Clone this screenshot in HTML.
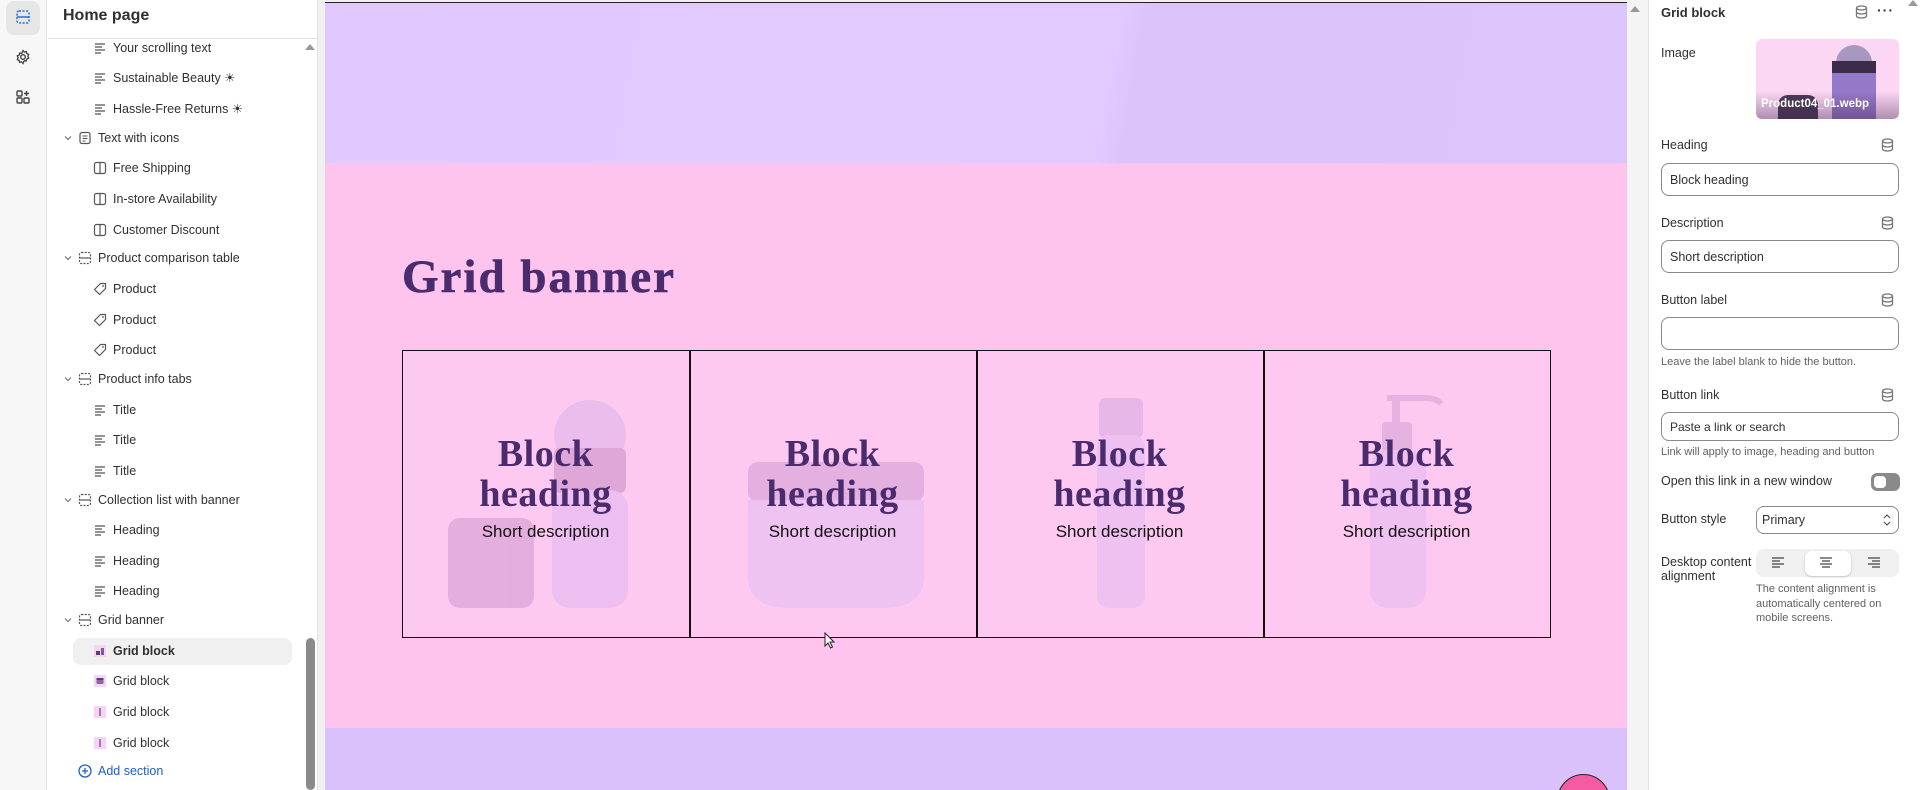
<!DOCTYPE html>
<html><head><meta charset="utf-8"><style>
*{box-sizing:border-box;margin:0;padding:0}
body{width:1920px;height:790px;overflow:hidden;background:#f1f1f1;font-family:"Liberation Sans",sans-serif;color:#303030;position:relative}
.abs{position:absolute}
.rail{left:0;top:0;width:47px;height:790px;background:#f7f7f7;border-right:1px solid #e3e3e3}
.panel{left:47px;top:0;width:271px;height:790px;background:#fff;border-right:1px solid #e3e3e3}
.row{position:absolute;font-size:12.5px;line-height:16px;white-space:nowrap}
.lbl{position:absolute;font-size:12.5px;left:1661px;color:#303030}
.inp{position:absolute;left:1661px;width:238px;border:1px solid #8a8a8a;border-radius:8px;background:#fff;font-size:12.5px;padding-left:8px;display:flex;align-items:center}
.hint{position:absolute;left:1661px;font-size:11px;color:#616161}
.db{position:absolute;left:1881px}
.bh{position:absolute;width:287px;text-align:center;font-family:"Liberation Serif",serif;font-weight:bold;color:#4a2c6e;font-size:38px;line-height:40px;letter-spacing:.5px}
.sd{position:absolute;width:287px;text-align:center;font-size:17px;color:#111}
</style></head><body>

<div class="abs rail"></div>
<div class="abs" style="left:6px;top:1px;width:34px;height:34px;background:#e6e6e6;border-radius:8px"></div>
<svg class="abs" style="left:15px;top:9px" width="16" height="16" viewBox="0 0 16 16"><rect x="2" y="2" width="12" height="12" rx="2" fill="none" stroke="#2c6ecb" stroke-width="1.5" stroke-dasharray="2 1.5"/><line x1="2" y1="8" x2="14" y2="8" stroke="#2c6ecb" stroke-width="1.5"/></svg>
<svg class="abs" style="left:15px;top:49px" width="16" height="16" viewBox="0 0 16 16"><circle cx="8" cy="8" r="2.3" fill="none" stroke="#444" stroke-width="1.4"/><path d="M8 1.5l1.3 1.6 2-.5.5 2 1.9.8-.8 1.9.8 1.9-1.9.8-.5 2-2-.5L8 14.5l-1.3-1.6-2 .5-.5-2-1.9-.8.8-1.9-.8-1.9 1.9-.8.5-2 2 .5z" fill="none" stroke="#444" stroke-width="1.3"/></svg>
<svg class="abs" style="left:15px;top:89px" width="16" height="16" viewBox="0 0 16 16"><rect x="2" y="2" width="5" height="5" rx="1" fill="none" stroke="#444" stroke-width="1.4"/><rect x="2" y="9" width="5" height="5" rx="1" fill="none" stroke="#444" stroke-width="1.4"/><rect x="9" y="9" width="5" height="5" rx="1" fill="none" stroke="#444" stroke-width="1.4"/><path d="M11.5 2v5M9 4.5h5" stroke="#444" stroke-width="1.4"/></svg>

<div class="abs panel"></div>
<div class="abs" style="left:63px;top:7px;font-size:16px;font-weight:bold;color:#303030">Home page</div>
<div class="abs" style="left:48px;top:38px;width:270px;height:1px;background:#e3e3e3"></div>
<div class="abs" style="left:305px;top:44px;width:0;height:0;border-left:5px solid transparent;border-right:5px solid transparent;border-bottom:6px solid #999"></div>
<div class="abs" style="left:306px;top:638px;width:9px;height:152px;background:#8a8a8a;border-radius:5px"></div>
<div class="abs" style="left:73px;top:638px;width:219px;height:27px;background:#f0f0f0;border-radius:8px"></div>

<div id="tree"></div>
<svg class="abs" style="left:78px;top:764px" width="14" height="14" viewBox="0 0 14 14"><circle cx="7" cy="7" r="6" fill="none" stroke="#1f5fc9" stroke-width="1.3"/><path d="M7 4v6M4 7h6" stroke="#1f5fc9" stroke-width="1.3"/></svg>
<div class="row" style="left:98px;top:763px;color:#1f5fc9">Add section</div>

<!-- preview -->
<div class="abs" style="left:325px;top:2px;width:1302px;height:788px;background:#fec4ee;overflow:hidden;border-top:1px solid #222">
 <div class="abs" style="left:0;top:0;width:1302px;height:160px;background:linear-gradient(100deg,#dfc9fd 0%,#e0caff 60%,#dac4f9 62%,#dbc5fa 100%)"></div>
 <div class="abs" style="left:0;top:725px;width:1302px;height:70px;background:#d9c1fb"></div>
 <div class="abs" style="left:1232px;top:771px;width:53px;height:53px;border-radius:50%;background:#f45ba3;border:1.5px solid #222"></div>
</div>
<div class="abs" style="left:402px;top:250px;font-family:'Liberation Serif',serif;font-weight:bold;font-size:47px;letter-spacing:2px;color:#4a2c6e;-webkit-text-stroke:.6px #4a2c6e">Grid banner</div>

<div class="abs" style="left:402px;top:350px;width:1149px;height:288px;border:1.5px solid #111;background:#fdc9f1"></div>
<div class="abs" style="left:689px;top:350px;width:1.5px;height:288px;background:#111"></div>
<div class="abs" style="left:976px;top:350px;width:1.5px;height:288px;background:#111"></div>
<div class="abs" style="left:1263px;top:350px;width:1.5px;height:288px;background:#111"></div>

<svg class="abs" style="left:402px;top:350px" width="1149" height="288" viewBox="0 0 1149 288">
 <g opacity=".55">
 <rect x="46" y="168" width="86" height="90" rx="12" fill="#cf98d0"/>
 <ellipse cx="188" cy="85" rx="36" ry="35" fill="#dcb5ea"/>
 <rect x="152" y="98" width="72" height="45" rx="6" fill="#c58dc4"/>
 <rect x="150" y="140" width="76" height="118" rx="18" fill="#e0b8f0"/>
 <rect x="346" y="112" width="176" height="40" rx="10" fill="#d09cd2"/>
 <path d="M346 150h176v75q0 33-40 33h-96q-40 0-40-33z" fill="#e2bbf1"/>
 <rect x="697" y="48" width="44" height="40" rx="6" fill="#d6aae0"/>
 <rect x="695" y="85" width="48" height="173" rx="12" fill="#e2baf1"/>
 <path d="M985 48h38q12 0 16 6" fill="none" stroke="#d4a0d4" stroke-width="6"/>
 <rect x="990" y="50" width="8" height="25" fill="#d4a0d4"/>
 <rect x="980" y="72" width="30" height="30" rx="4" fill="#d4a0d4"/>
 <rect x="968" y="100" width="56" height="158" rx="18" fill="#e2baf1"/>
 </g>
</svg>

<div class="bh" style="left:402px;top:434px">Block<br>heading</div>
<div class="bh" style="left:689px;top:434px">Block<br>heading</div>
<div class="bh" style="left:976px;top:434px">Block<br>heading</div>
<div class="bh" style="left:1263px;top:434px">Block<br>heading</div>
<div class="sd" style="left:402px;top:522px">Short description</div>
<div class="sd" style="left:689px;top:522px">Short description</div>
<div class="sd" style="left:976px;top:522px">Short description</div>
<div class="sd" style="left:1263px;top:522px">Short description</div>
<svg class="abs" style="left:824px;top:632px" width="14" height="18" viewBox="0 0 14 18"><path d="M1 1v13l3-3 2.5 5 2-1-2.5-5h4z" fill="#fff" stroke="#222" stroke-width="1"/></svg>

<!-- right panel -->
<div class="abs" style="left:1627px;top:0;width:21px;height:790px;background:#f4f4f4"></div>
<div class="abs" style="left:1630px;top:6px;width:0;height:0;border-left:5px solid transparent;border-right:5px solid transparent;border-bottom:6px solid #999"></div>
<div class="abs" style="left:1648px;top:0;width:272px;height:790px;background:#fff;border-left:1px solid #e3e3e3"></div>
<div class="abs" style="left:1908px;top:0;width:0;height:0;border-left:5px solid transparent;border-right:5px solid transparent;border-bottom:6px solid #999"></div>
<div class="abs" style="left:1661px;top:5px;font-size:13px;font-weight:bold">Grid block</div>
<div class="db" style="left:1855px;top:5px"></div>
<div class="abs" style="left:1877px;top:2px;font-size:14px;font-weight:bold;letter-spacing:1px">···</div>

<div class="lbl" style="top:46px">Image</div>
<div class="abs" style="left:1756px;top:39px;width:143px;height:80px;border-radius:6px;overflow:hidden;background:#fbd7f4">
 <div class="abs" style="left:80px;top:6px;width:36px;height:28px;border-radius:18px 18px 0 0;background:#a898c0"></div>
 <div class="abs" style="left:76px;top:24px;width:44px;height:60px;background:#9479c8"></div>
 <div class="abs" style="left:76px;top:22px;width:44px;height:12px;background:#3d2b4b"></div>
 <div class="abs" style="left:22px;top:56px;width:40px;height:40px;border-radius:10px;background:#4a3a55"></div>
 <div class="abs" style="left:0;top:52px;width:143px;height:28px;background:linear-gradient(transparent,rgba(60,30,70,.4))"></div>
 <div class="abs" style="left:5px;top:59px;color:#fff;font-size:11.5px;font-weight:bold">Product04_01.webp</div>
</div>

<div class="lbl" style="top:138px">Heading</div><div class="db" style="top:138px"></div>
<div class="inp" style="top:163px;height:33px">Block heading</div>
<div class="lbl" style="top:216px">Description</div><div class="db" style="top:216px"></div>
<div class="inp" style="top:240px;height:33px">Short description</div>
<div class="lbl" style="top:293px">Button label</div><div class="db" style="top:293px"></div>
<div class="inp" style="top:317px;height:33px"></div>
<div class="hint" style="top:356px">Leave the label blank to hide the button.</div>
<div class="lbl" style="top:388px">Button link</div><div class="db" style="top:388px"></div>
<div class="inp" style="top:412px;height:29px;font-size:12px">Paste a link or search</div>
<div class="hint" style="top:446px">Link will apply to image, heading and button</div>
<div class="lbl" style="top:474px">Open this link in a new window</div>
<div class="abs" style="left:1871px;top:473px;width:29px;height:18px;border-radius:6px;background:#8a8a8a"><div class="abs" style="left:3px;top:3px;width:12px;height:12px;border-radius:4px;background:#fff"></div></div>
<div class="lbl" style="top:512px">Button style</div>
<div class="abs" style="left:1756px;top:506px;width:143px;height:28px;border:1px solid #8a8a8a;border-radius:8px;font-size:12.5px;padding:6px 0 0 5px">Primary<svg class="abs" style="right:7px;top:7px" width="8" height="12" viewBox="0 0 8 12"><path d="M1 4l3-3 3 3M1 8l3 3 3-3" fill="none" stroke="#555" stroke-width="1.2"/></svg></div>
<div class="lbl" style="top:555px;line-height:14px">Desktop content<br>alignment</div>
<div class="abs" style="left:1756px;top:549px;width:143px;height:28px;border-radius:8px;background:#f0f0f0"></div>
<div class="abs" style="left:1805px;top:551px;width:46px;height:25px;border-radius:7px;background:#fff;box-shadow:0 1px 2px rgba(0,0,0,.2)"></div>
<svg class="abs" style="left:1772px;top:556px" width="112" height="14" viewBox="0 0 112 14"><path d="M0 2h12M0 5h8M0 8h12M0 11h8" stroke="#444" stroke-width="1.2"/><path d="M48 2h12M50 5h8M48 8h12M50 11h8" stroke="#444" stroke-width="1.2"/><path d="M96 2h12M100 5h8M96 8h12M100 11h8" stroke="#444" stroke-width="1.2"/></svg>
<div class="hint" style="left:1756px;top:582px;line-height:14.5px;width:145px">The content alignment is automatically centered on mobile screens.</div>

<script>
const items=[
[1,'Your scrolling text',48,'t'],[1,'Sustainable Beauty ☀',78,'t'],[1,'Hassle-Free Returns ☀',109,'t'],
[0,'Text with icons',138,'s2'],[1,'Free Shipping',168,'c'],[1,'In-store Availability',199,'c'],[1,'Customer Discount',230,'c'],
[0,'Product comparison table',258,'s'],[1,'Product',289,'g'],[1,'Product',320,'g'],[1,'Product',350,'g'],
[0,'Product info tabs',379,'s'],[1,'Title',410,'t'],[1,'Title',440,'t'],[1,'Title',471,'t'],
[0,'Collection list with banner',500,'s'],[1,'Heading',530,'t'],[1,'Heading',561,'t'],[1,'Heading',591,'t'],
[0,'Grid banner',620,'s'],[1,'Grid block',651,'i1'],[1,'Grid block',681,'i2'],[1,'Grid block',712,'i'],[1,'Grid block',743,'i']];
const icons={
t:'<path d="M2 3h10M2 6h7M2 9h10M2 12h6" stroke="#555" stroke-width="1.2"/>',
c:'<rect x="1.5" y="1.5" width="11" height="11" rx="2" fill="none" stroke="#555" stroke-width="1.2"/><path d="M7 1.5v11" stroke="#555" stroke-width="1.2"/>',
g:'<path d="M7.5 1.5h5v5L6.5 12.5 1.5 7.5z" fill="none" stroke="#555" stroke-width="1.2" stroke-linejoin="round"/><circle cx="10" cy="4" r=".9" fill="#555"/>',
s:'<rect x="1.5" y="1.5" width="11" height="11" rx="2" fill="none" stroke="#555" stroke-width="1.2" stroke-dasharray="2 1.3"/><path d="M1.5 7h11" stroke="#555" stroke-width="1.2"/>',
s2:'<rect x="2" y="1.5" width="10" height="11" rx="2" fill="none" stroke="#555" stroke-width="1.2"/><path d="M4.5 5h5M4.5 7.5h5M4.5 10h3" stroke="#555" stroke-width="1.1"/>',
i:'<rect x="1" y="1" width="12" height="12" fill="#f8d4f2"/><rect x="6" y="3" width="2" height="8" fill="#a07ac0"/>',
i1:'<rect x="1" y="1" width="12" height="12" fill="#f8d4f2"/><rect x="3" y="7" width="4" height="4" fill="#5a4070"/><rect x="8" y="4" width="3" height="7" fill="#7a5aa0"/>',
i2:'<rect x="1" y="1" width="12" height="12" fill="#f8d4f2"/><rect x="3.5" y="5" width="7" height="5" rx="1" fill="#8a66a8"/><rect x="3.5" y="4" width="7" height="2" fill="#5a4070"/>'};
let h='';
for(const [lv,txt,y,ic] of items){
 const top=y-8;
 if(lv===0){
  h+=`<svg class="abs" style="left:63px;top:${top+3}px" width="10" height="10" viewBox="0 0 10 10"><path d="M2 3.5l3 3 3-3" fill="none" stroke="#777" stroke-width="1.2"/></svg>`;
  h+=`<svg class="abs" style="left:78px;top:${top+1}px" width="14" height="14" viewBox="0 0 14 14">${icons[ic]}</svg>`;
  h+=`<div class="row" style="left:98px;top:${top}px">${txt}</div>`;
 }else{
  h+=`<svg class="abs" style="left:93px;top:${top+1}px" width="14" height="14" viewBox="0 0 14 14">${icons[ic]}</svg>`;
  h+=`<div class="row" style="left:113px;top:${top}px;${y==651?'font-weight:bold':''}">${txt}</div>`;
 }
}
document.getElementById('tree').innerHTML=h;
const dbsvg='<svg width="13" height="14" viewBox="0 0 13 14"><ellipse cx="6.5" cy="3" rx="5" ry="2" fill="none" stroke="#777" stroke-width="1.3"/><path d="M1.5 3v8c0 1.1 2.2 2 5 2s5-.9 5-2V3M1.5 7c0 1.1 2.2 2 5 2s5-.9 5-2" fill="none" stroke="#777" stroke-width="1.3"/></svg>';
document.querySelectorAll('.db').forEach(e=>e.innerHTML=dbsvg);
</script>
</body></html>
